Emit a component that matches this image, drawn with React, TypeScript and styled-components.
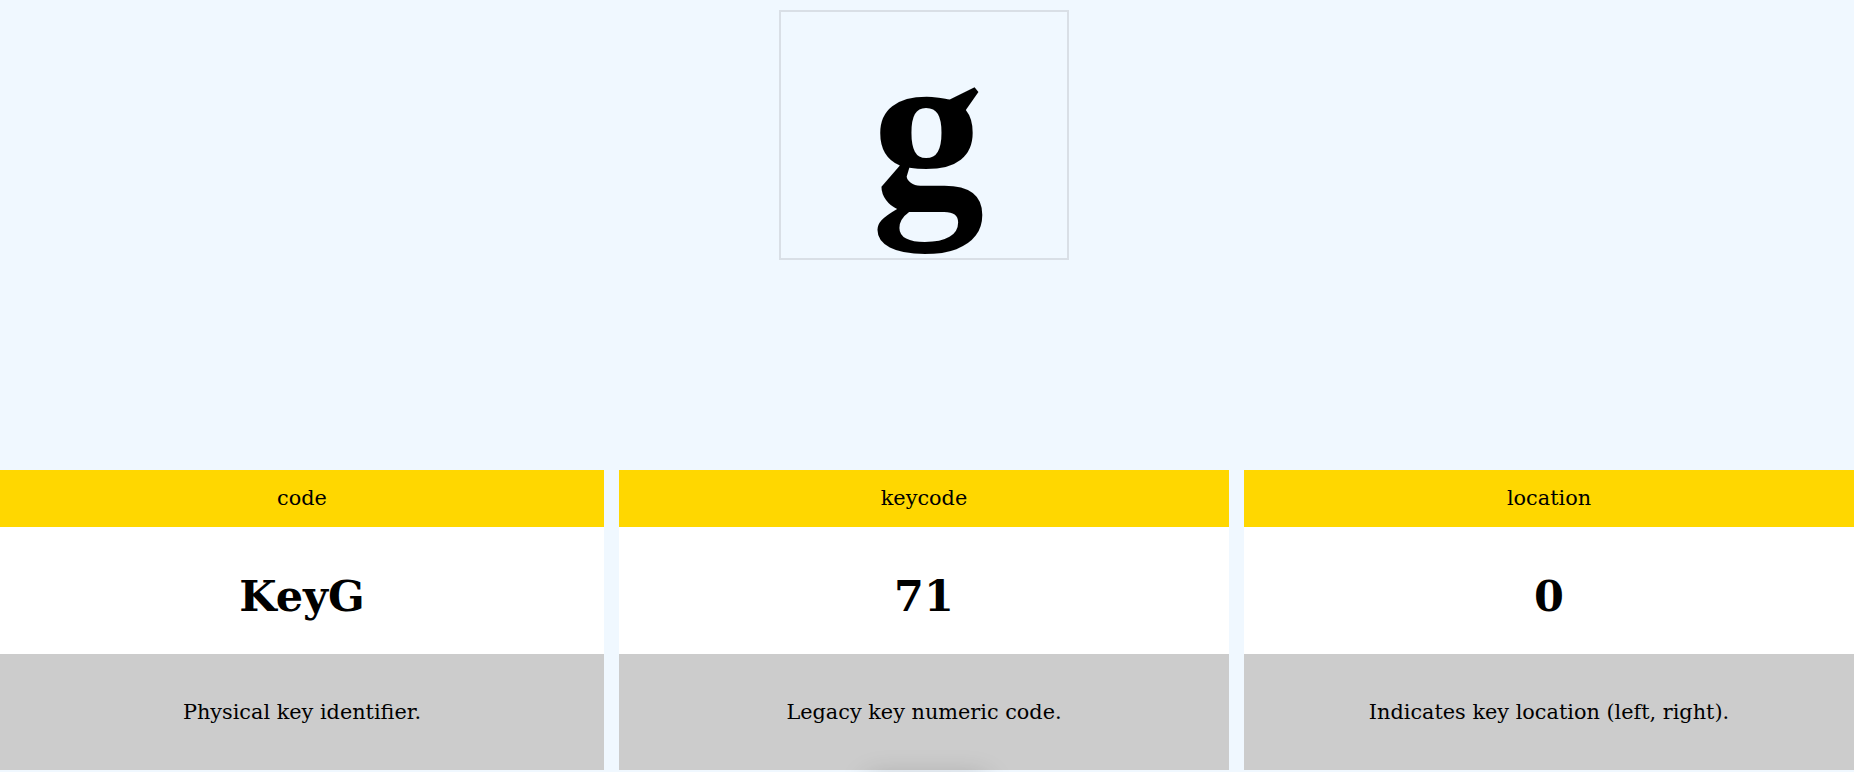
import React from "react";
import styled, { createGlobalStyle } from "styled-components";

const GlobalStyle = createGlobalStyle`
  html, body {
    margin: 0;
    padding: 0;
    background: #f0f8ff;
    font-family: "DejaVu Serif", "Liberation Serif", serif;
    color: #000;
  }
`;

const Page = styled.main`
  display: flex;
  flex-direction: column;
  align-items: stretch;
`;

const KeyStage = styled.section`
  height: 470px;
  display: flex;
  justify-content: center;
  align-items: flex-start;
  padding: 10px 6px 0 0;
  box-sizing: border-box;
`;

const KeyBox = styled.div`
  width: 290px;
  height: 250px;
  box-sizing: border-box;
  border: 2px solid #d9dfe6;
  display: flex;
  justify-content: center;
  align-items: flex-start;
`;

const KeyGlyph = styled.span`
  font-family: "Liberation Serif", serif;
  font-weight: 700;
  font-size: 226px;
  line-height: 1;
  margin-top: 3px;
  margin-left: 8px;
`;

const Cards = styled.section`
  display: grid;
  grid-template-columns: 604fr 610fr 610fr;
  column-gap: 15px;
`;

const Card = styled.article`
  display: flex;
  flex-direction: column;
  text-align: center;
`;

const CardHeader = styled.div`
  background: #ffd700;
  font-size: 20.8px;
  line-height: 23px;
  padding: 17px 10px;
`;

const CardValue = styled.div`
  background: #ffffff;
  font-size: 43px;
  font-weight: 700;
  line-height: 51px;
  padding: 44px 10px 32px;
`;

const CardDesc = styled.div`
  background: #cccccc;
  font-size: 20.8px;
  line-height: 24px;
  padding: 46px 10px;
`;

const Below = styled.div`
  align-self: center;
  width: 120px;
  height: 40px;
  margin-top: 8px;
  background: #cfcfcf;
  border-radius: 6px;
  box-shadow: 0 0 28px rgba(0, 0, 0, 0.22);
`;

const items = [
  { name: "code", value: "KeyG", desc: "Physical key identifier." },
  { name: "keycode", value: "71", desc: "Legacy key numeric code." },
  { name: "location", value: "0", desc: "Indicates key location (left, right)." },
];

export default function App() {
  return (
    <>
      <GlobalStyle />
      <Page>
        <KeyStage>
          <KeyBox>
            <KeyGlyph>g</KeyGlyph>
          </KeyBox>
        </KeyStage>
        <Cards>
          {items.map((it) => (
            <Card key={it.name}>
              <CardHeader>{it.name}</CardHeader>
              <CardValue>{it.value}</CardValue>
              <CardDesc>{it.desc}</CardDesc>
            </Card>
          ))}
        </Cards>
        <Below />
      </Page>
    </>
  );
}
